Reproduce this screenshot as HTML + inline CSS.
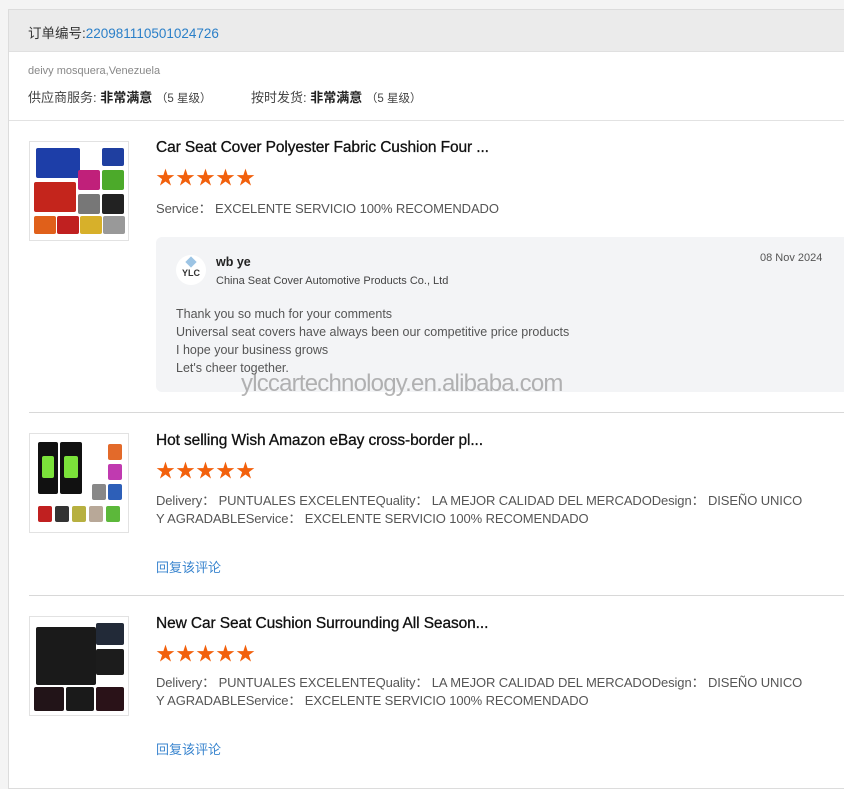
<!DOCTYPE html>
<html><head><meta charset="utf-8"><style>
*{margin:0;padding:0;box-sizing:border-box}
body{width:844px;height:770px;overflow:hidden;background:#f4f4f4;font-family:"Liberation Sans","Noto Sans CJK SC",sans-serif;color:#333;position:relative}
.card{position:absolute;left:8px;top:9px;width:850px;height:780px;background:#fff;border:1px solid #dcdcdc}
.hd{position:absolute;left:0;top:0;right:0;height:42px;background:#ebebeb;border-bottom:1px solid #e0e0e0}
.a{position:absolute;white-space:nowrap}
.blue{color:#2a7fc8}
.sep{position:absolute;height:1px;background:#d8d8d8}
.img{position:absolute;width:100px;height:100px;border:1px solid #e2e2e2;background:#fff;overflow:hidden}
.img i{position:absolute;display:block;border-radius:2px}
.t{font-size:15.5px;color:#111;letter-spacing:-0.1px;-webkit-text-stroke:0.3px #111}
.stars{color:#f2600c;font-size:19px;letter-spacing:1px}
.txt{font-size:13px;color:#555;letter-spacing:-0.1px}
.reply{position:absolute;left:147px;top:227px;width:700px;height:155px;background:#f3f4f6;border-radius:6px}
</style></head><body>
<div class="card">
 <div class="hd"></div>
 <div class="a" style="left:19px;top:12px;font-size:13.5px;color:#333">订单编号:<span class="blue">220981110501024726</span></div>
 <div class="a" style="left:19px;top:55px;font-size:11px;color:#888">deivy mosquera,Venezuela</div>
 <div class="a" style="left:19px;top:77px;font-size:13px;color:#444">供应商服务: <b style="color:#222">非常满意</b> <span style="font-size:11.5px">（5 星级）</span></div>
 <div class="a" style="left:242px;top:77px;font-size:13px;color:#444">按时发货: <b style="color:#222">非常满意</b> <span style="font-size:11.5px">（5 星级）</span></div>
 <div class="sep" style="left:0;right:0;top:110px;background:#e2e2e2"></div>

 <div class="img" style="left:20px;top:131px">
  <i style="left:6px;top:6px;width:44px;height:30px;background:#1d3ea8"></i>
  <i style="left:72px;top:6px;width:22px;height:18px;background:#1f3fa0"></i>
  <i style="left:48px;top:28px;width:22px;height:20px;background:#c0207a"></i>
  <i style="left:72px;top:28px;width:22px;height:20px;background:#4caa2a"></i>
  <i style="left:4px;top:40px;width:42px;height:30px;background:#c4251c"></i>
  <i style="left:48px;top:52px;width:22px;height:20px;background:#777"></i>
  <i style="left:72px;top:52px;width:22px;height:20px;background:#222"></i>
  <i style="left:4px;top:74px;width:22px;height:18px;background:#e0601a"></i>
  <i style="left:27px;top:74px;width:22px;height:18px;background:#c02020"></i>
  <i style="left:50px;top:74px;width:22px;height:18px;background:#d7b02a"></i>
  <i style="left:73px;top:74px;width:22px;height:18px;background:#999"></i>
 </div>
 <div class="a t" style="left:147px;top:129px">Car Seat Cover Polyester Fabric Cushion Four ...</div>
 <div class="a stars" style="left:147px;top:153px">★★★★★</div>
 <div class="a txt" style="left:147px;top:188px">Service：  EXCELENTE SERVICIO 100% RECOMENDADO</div>

 <div class="reply">
  <div class="a" style="left:20px;top:18px;width:30px;height:30px;border-radius:50%;background:#fff;text-align:center;font-size:9px;font-weight:bold;color:#333;padding-top:13px">YLC</div>
  <div class="a" style="left:31px;top:21px;width:8px;height:8px;background:#9cc4e4;transform:rotate(45deg)"></div>
  <div class="a" style="left:60px;top:18px;font-size:12.5px;font-weight:bold;color:#222">wb ye</div>
  <div class="a" style="left:60px;top:38px;font-size:11px;color:#444">China Seat Cover Automotive Products Co., Ltd</div>
  <div class="a" style="left:604px;top:15px;font-size:11px;color:#555">08 Nov 2024</div>
  <div class="a" style="left:20px;top:68px;font-size:12.5px;color:#555;line-height:18px">Thank you so much for your comments<br>Universal seat covers have always been our competitive price products<br>I hope your business grows<br>Let's cheer together.</div>
 </div>
 <div class="a" style="left:232px;top:360px;font-size:24px;color:rgba(120,120,120,0.55);letter-spacing:-0.8px">ylccartechnology.en.alibaba.com</div>

 <div class="sep" style="left:20px;right:0;top:402px"></div>

 <div class="img" style="left:20px;top:423px">
  <i style="left:8px;top:8px;width:20px;height:52px;background:#111"></i>
  <i style="left:12px;top:22px;width:12px;height:22px;background:#7be23a"></i>
  <i style="left:30px;top:8px;width:22px;height:52px;background:#111"></i>
  <i style="left:34px;top:22px;width:14px;height:22px;background:#7be23a"></i>
  <i style="left:78px;top:10px;width:14px;height:16px;background:#e36a2a"></i>
  <i style="left:78px;top:30px;width:14px;height:16px;background:#c03ab0"></i>
  <i style="left:62px;top:50px;width:14px;height:16px;background:#888"></i>
  <i style="left:78px;top:50px;width:14px;height:16px;background:#2d5fb8"></i>
  <i style="left:8px;top:72px;width:14px;height:16px;background:#c02020"></i>
  <i style="left:25px;top:72px;width:14px;height:16px;background:#333"></i>
  <i style="left:42px;top:72px;width:14px;height:16px;background:#b7b040"></i>
  <i style="left:59px;top:72px;width:14px;height:16px;background:#b8a898"></i>
  <i style="left:76px;top:72px;width:14px;height:16px;background:#5cb83a"></i>
 </div>
 <div class="a t" style="left:147px;top:422px">Hot selling Wish Amazon eBay cross-border pl...</div>
 <div class="a stars" style="left:147px;top:446px">★★★★★</div>
 <div class="a txt" style="left:147px;top:482px;line-height:18px">Delivery：  PUNTUALES EXCELENTEQuality：  LA MEJOR CALIDAD DEL MERCADODesign：  DISEÑO UNICO<br>Y AGRADABLEService：  EXCELENTE SERVICIO 100% RECOMENDADO</div>
 <div class="a" style="left:147px;top:547px;font-size:13px;color:#3b86cf">回复该评论</div>

 <div class="sep" style="left:20px;right:0;top:585px"></div>

 <div class="img" style="left:20px;top:606px">
  <i style="left:6px;top:10px;width:60px;height:58px;background:#1a1a1a"></i>
  <i style="left:66px;top:6px;width:28px;height:22px;background:#222a38"></i>
  <i style="left:66px;top:32px;width:28px;height:26px;background:#1c1c1c"></i>
  <i style="left:4px;top:70px;width:30px;height:24px;background:#221418"></i>
  <i style="left:36px;top:70px;width:28px;height:24px;background:#1a1a1a"></i>
  <i style="left:66px;top:70px;width:28px;height:24px;background:#2a1218"></i>
 </div>
 <div class="a t" style="left:147px;top:605px">New Car Seat Cushion Surrounding All Season...</div>
 <div class="a stars" style="left:147px;top:629px">★★★★★</div>
 <div class="a txt" style="left:147px;top:664px;line-height:18px">Delivery：  PUNTUALES EXCELENTEQuality：  LA MEJOR CALIDAD DEL MERCADODesign：  DISEÑO UNICO<br>Y AGRADABLEService：  EXCELENTE SERVICIO 100% RECOMENDADO</div>
 <div class="a" style="left:147px;top:729px;font-size:13px;color:#3b86cf">回复该评论</div>
</div>
</body></html>
